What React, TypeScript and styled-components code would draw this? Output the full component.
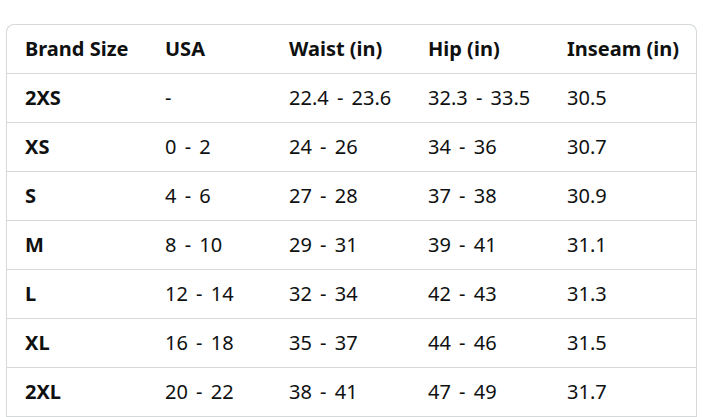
import { type FC } from 'react'
import styled, { createGlobalStyle } from 'styled-components'

const GlobalStyle = createGlobalStyle`
    html, body {
        margin: 0;
        padding: 0;
        background: #ffffff;
    }

    body {
        font-family: 'Noto Sans', 'Open Sans', Arial, sans-serif;
        color: #0f1111;
    }
`

const Page = styled.div`
    padding: 24px 11px 0 6px;
`

const Table = styled.div`
    display: grid;
    grid-template-columns: 140px 124px 139px 139px 1fr;
    width: 689px;
    border: 1px solid #d5d9d9;
    border-bottom: none;
    border-radius: 8px 8px 0 0;
    overflow: hidden;
`

const Row = styled.div`
    display: contents;
`

const Cell = styled.div<{ $bold?: boolean }>`
    display: flex;
    align-items: center;
    height: 48px;
    padding-left: 18px;
    border-bottom: 1px solid #d5d9d9;
    font-size: 20px;
    line-height: 24px;
    font-weight: ${({ $bold }) => ($bold ? 700 : 400)};
    word-spacing: ${({ $bold }) => ($bold ? 0 : 3)}px;
    white-space: nowrap;
`

const headers = ['Brand Size', 'USA', 'Waist (in)', 'Hip (in)', 'Inseam (in)']

const rows = [
    ['2XS', '-', '22.4 - 23.6', '32.3 - 33.5', '30.5'],
    ['XS', '0 - 2', '24 - 26', '34 - 36', '30.7'],
    ['S', '4 - 6', '27 - 28', '37 - 38', '30.9'],
    ['M', '8 - 10', '29 - 31', '39 - 41', '31.1'],
    ['L', '12 - 14', '32 - 34', '42 - 43', '31.3'],
    ['XL', '16 - 18', '35 - 37', '44 - 46', '31.5'],
    ['2XL', '20 - 22', '38 - 41', '47 - 49', '31.7'],
]

const SizeChart: FC = () => (
    <Table>
        <Row>
            {headers.map((h) => (
                <Cell key={h} $bold>
                    {h}
                </Cell>
            ))}
        </Row>
        {rows.map((r) => (
            <Row key={r[0]}>
                {r.map((v, i) => (
                    <Cell key={i} $bold={i === 0}>
                        {v}
                    </Cell>
                ))}
            </Row>
        ))}
    </Table>
)

const App: FC = () => (
    <>
        <GlobalStyle />
        <Page>
            <SizeChart />
        </Page>
    </>
)

export default App
